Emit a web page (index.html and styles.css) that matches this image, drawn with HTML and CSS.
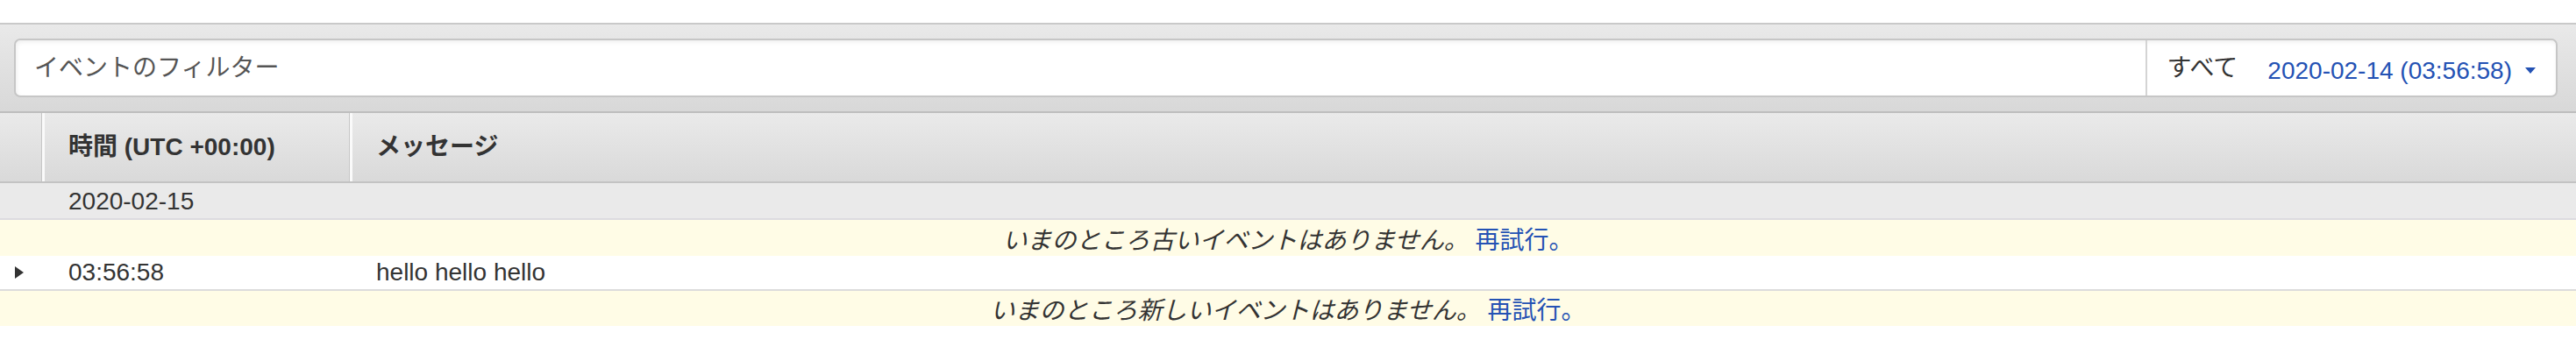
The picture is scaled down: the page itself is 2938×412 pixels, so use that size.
FILE: index.html
```html
<!DOCTYPE html>
<html lang="ja">
<head>
<meta charset="utf-8">
<title>Log events</title>
<link rel="stylesheet" href="styles.css">
</head>
<body>
<div class="toolbar">
  <div class="search">
    <div class="filter">イベントのフィルター</div>
    <div class="range">
      <span class="range-all">すべて</span>
      <span class="range-date">2020-02-14 (03:56:58)</span>
      <span class="caret"></span>
    </div>
  </div>
</div>
<div class="row header">
  <div class="cell"></div>
  <div class="cell">時間 (UTC +00:00)</div>
  <div class="cell">メッセージ</div>
</div>
<div class="row daterow">
  <div class="cell"></div>
  <div class="cell">2020-02-15</div>
  <div class="cell"></div>
</div>
<div class="notice notice-old">いまのところ古いイベントはありません。 <a class="retry" href="#">再試行。</a></div>
<div class="row event">
  <div class="cell"><span class="expander"></span></div>
  <div class="cell">03:56:58</div>
  <div class="cell">hello hello hello</div>
</div>
<div class="notice notice-new">いまのところ新しいイベントはありません。 <a class="retry" href="#">再試行。</a></div>
</body>
</html>
```

FILE: styles.css
```css
html, body {
  margin: 0;
  padding: 0;
  background: #fff;
}
body {
  font-family: "Liberation Sans", "Noto Sans CJK JP", sans-serif;
  font-size: 28px;
  color: #333;
  padding-top: 26px;
}
.toolbar {
  border-top: 2px solid #c9c9c9;
  border-bottom: 2px solid #bebebe;
  background: linear-gradient(#e9e9e9, #d8d8d8);
  padding: 16px 21px 16px 16px;
}
.search {
  height: 67px;
  box-sizing: border-box;
  border: 2px solid #c6c6c6;
  border-radius: 7px;
  background: #fff;
  box-shadow: inset 1px 2px 5px rgba(0, 0, 0, 0.07);
  display: flex;
  align-items: center;
}
.filter {
  flex: 1;
  padding-left: 21px;
  color: #555;
  line-height: 34px;
}
.range {
  align-self: stretch;
  display: flex;
  align-items: center;
  border-left: 2px solid #d4d4d4;
  padding: 0 23px 0 22px;
  line-height: 34px;
}
.range-all {
  color: #333;
  margin-right: 34px;
}
.range-date {
  color: #2452b4;
  margin-right: 15px;
  margin-top: 6px;
}
.caret {
  width: 0;
  height: 0;
  border-left: 6px solid transparent;
  border-right: 6px solid transparent;
  border-top: 7px solid #2452b4;
  margin-top: 6px;
}
.row {
  display: grid;
  grid-template-columns: 47px 351px 1fr;
  align-items: center;
}
.row .cell {
  padding-left: 30px;
  line-height: 34px;
  white-space: nowrap;
}
.row .cell:first-child {
  padding-left: 0;
}
.header {
  height: 80px;
  box-sizing: border-box;
  background: linear-gradient(#eaeaea, #d9d9d9);
  border-bottom: 2px solid #c3c3c3;
  font-weight: bold;
  align-items: stretch;
}
.header .cell {
  display: flex;
  align-items: center;
}
.header .cell + .cell {
  border-left: 1px solid #c6c6c6;
  box-shadow: inset 3px 0 0 #fafafa;
}
.daterow {
  height: 42px;
  box-sizing: border-box;
  background: #eaeaea;
  border-bottom: 2px solid #dcdbe0;
  padding-top: 2px;
}
.daterow .cell:nth-child(2), .event .cell:nth-child(2) {
  padding-left: 31px;
}
.event {
  height: 40px;
  box-sizing: border-box;
  background: #fff;
  border-bottom: 2px solid #dcdcdc;
}
.event .cell:first-child {
  display: flex;
  align-items: center;
  padding-left: 17px;
}
.event .cell:nth-child(3) {
  padding-left: 31px;
}
.expander {
  width: 0;
  height: 0;
  border-top: 7px solid transparent;
  border-bottom: 7px solid transparent;
  border-left: 10px solid #333;
}
.notice {
  background: #fffce6;
  text-align: center;
  font-style: italic;
  display: flex;
  align-items: center;
  justify-content: center;
  white-space: pre;
}
.notice-old {
  height: 41px;
}
.notice-new {
  height: 40px;
}
.retry {
  color: #2452b4;
  font-style: normal;
  text-decoration: none;
}
```
